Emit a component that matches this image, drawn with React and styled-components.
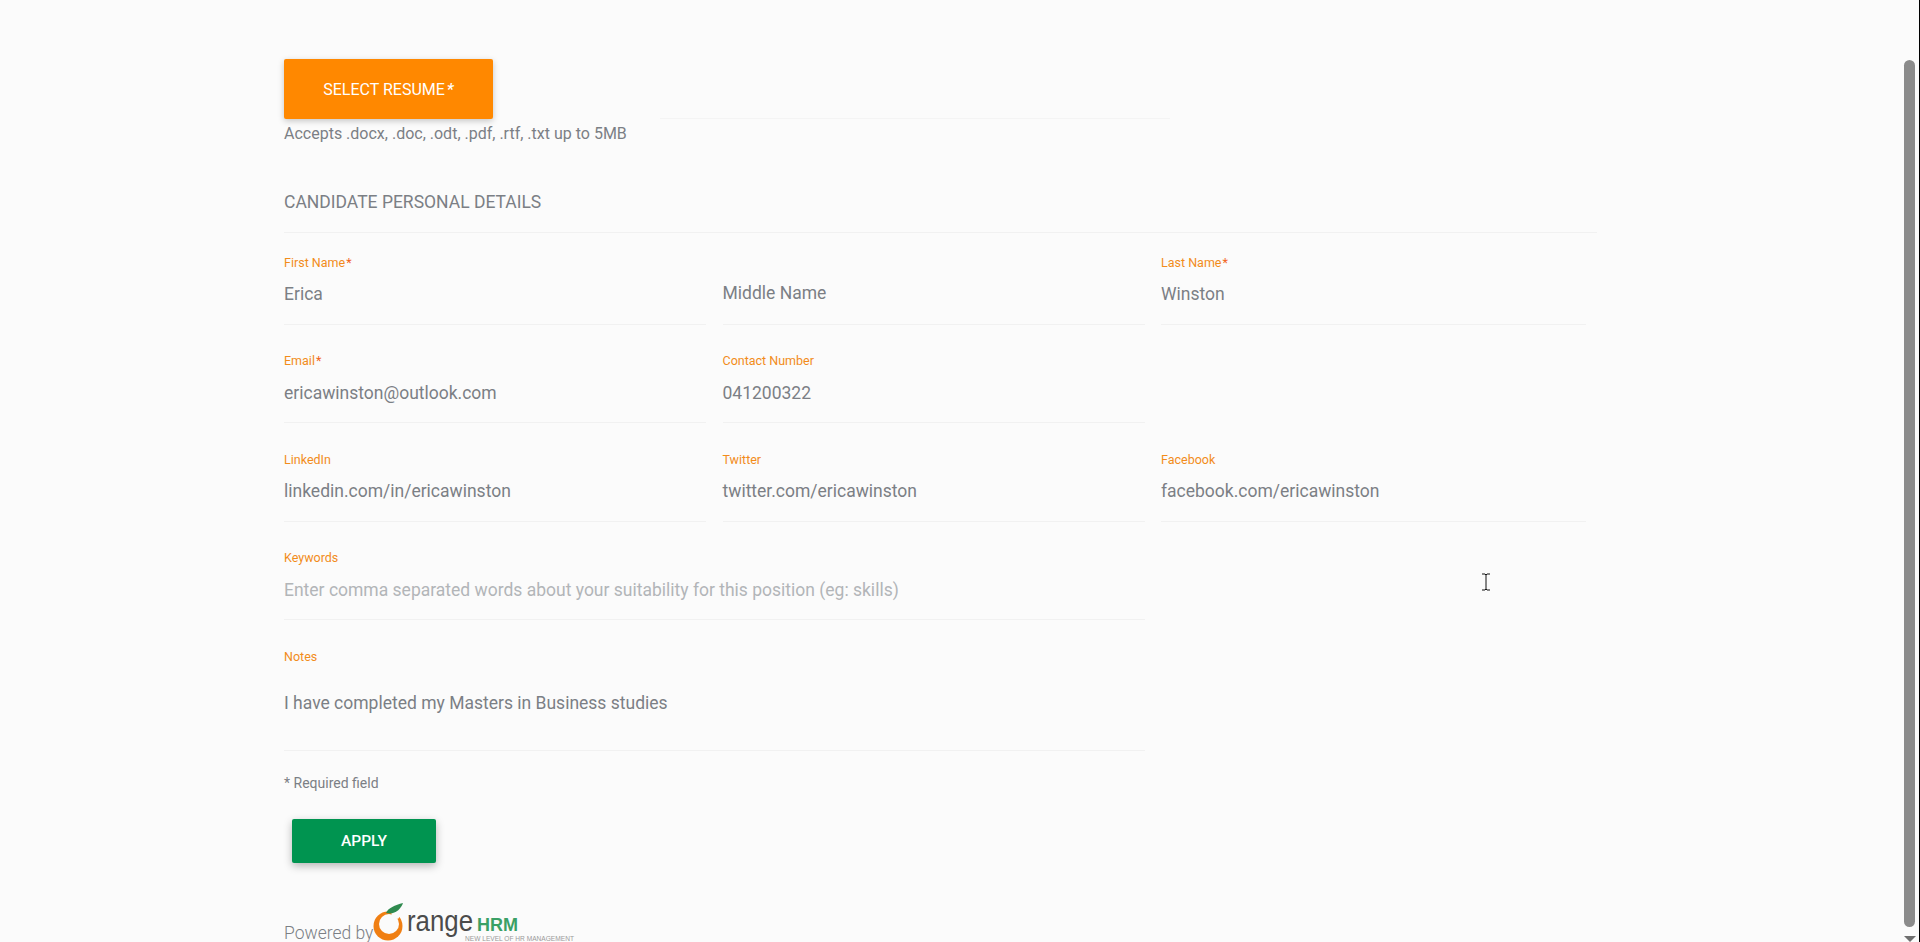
import styled, { createGlobalStyle } from "styled-components";

const GlobalStyle = createGlobalStyle`
  html, body {
    margin: 0;
    height: 100%;
    overflow: hidden;
    background: #fbfbfb;
    font-family: Roboto, "Liberation Sans", sans-serif;
    color: #7b7f85;
  }
`;

const Page = styled.main`
  position: relative;
  height: 942px;
  overflow: hidden;
  padding: 59px 0 0 284px;
  box-sizing: border-box;
`;

const UploadRow = styled.div`
  display: flex;
  align-items: flex-end;
  height: 60px;
`;

const SelectButton = styled.button`
  width: 209px;
  height: 60px;
  border: 0;
  border-radius: 2px;
  background: #ff8800;
  color: #fff;
  font: 400 16px Roboto, sans-serif;
  box-shadow: 0 2px 6px rgba(0, 0, 0, 0.22);
`;

const ButtonStar = styled.span`
  margin-left: 2px;
  font-style: italic;
  font-weight: 500;
`;

const FileLine = styled.div`
  width: 510px;
  margin-left: 167px;
  border-bottom: 1px solid #f4f4f4;
`;

const Hint = styled.p`
  margin: 5px 0 0;
  font-size: 16px;
  line-height: 20px;
`;

const SectionTitle = styled.h2`
  margin: 48px 0 0;
  width: 1313px;
  padding-bottom: 20px;
  border-bottom: 1px solid #f1f1f1;
  font-size: 17.5px;
  font-weight: 400;
  line-height: 20px;
`;

const Grid = styled.div`
  display: grid;
  grid-template-columns: 422px 422px 425px;
  column-gap: 16.5px;
  row-gap: 29.5px;
  margin-top: 22.6px;
`;

const Field = styled.div`
  grid-column: ${(p) => (p.$wide ? "1 / span 2" : p.$first ? "1" : "auto")};
  height: ${(p) => p.$tall || 69}px;
  box-sizing: border-box;
  border-bottom: 1px solid #f1f1f1;
`;

const Label = styled.label`
  display: block;
  height: 14px;
  font-size: 12.5px;
  line-height: 14px;
  color: #f28c1a;
`;

const Star = styled.span`
  margin-left: 1px;
  color: #f2641a;
`;

const Value = styled.div`
  margin-top: ${(p) => p.$gap || 13.5}px;
  font-size: 17.5px;
  line-height: 22px;
  color: ${(p) => (p.$placeholder ? "#b2b5b8" : "#7b7f85")};
`;

const Required = styled.p`
  margin: 23.5px 0 0;
  font-size: 14px;
  line-height: 18px;
`;

const ApplyButton = styled.button`
  display: block;
  width: 144px;
  height: 44px;
  margin: 27px 0 0 8px;
  border: 0;
  border-radius: 2px;
  background: #009450;
  color: #fff;
  font: 500 15.5px Roboto, sans-serif;
  box-shadow: 0 3px 8px rgba(0, 0, 0, 0.28);
`;

const Footer = styled.div`
  display: flex;
  align-items: flex-end;
  height: 44px;
  margin-top: 36px;
`;

const Powered = styled.span`
  font-size: 17.5px;
  font-weight: 300;
  line-height: 20px;
  white-space: nowrap;
`;

const Track = styled.div`
  position: absolute;
  top: 0;
  right: 0;
  bottom: 0;
  width: 16px;
  padding-top: 60px;
  display: flex;
  flex-direction: column;
  align-items: flex-start;
  gap: 9px;
  background: #fbfbfb;
  border-right: 1px solid #000;
  box-sizing: border-box;
`;

const Thumb = styled.div`
  width: 11px;
  height: 867px;
  border-radius: 6px;
  background: #8b8b8b;
`;

const DownArrow = styled.div`
  border-left: 6px solid transparent;
  border-right: 6px solid transparent;
  border-top: 6px solid #6f6f6f;
`;

const Cursor = styled.svg`
  position: absolute;
  left: 1481px;
  top: 573px;
`;

function Logo() {
  return (
    <svg width="205" height="44" viewBox="0 0 205 44" style={{ display: "block" }}>
      <circle cx="15" cy="27" r="14.5" fill="#f07f13" />
      <circle cx="16" cy="25" r="10" fill="#fbfbfb" />
      <path d="M17 8 L32 10 L25 20 L19 17 Z" fill="#fbfbfb" />
      <path d="M13 14 C15 9 22 6 30 4 C28 10 22 16 13 14 Z" fill="#2f8a4f" />
      <text x="34" y="32" fontFamily="Liberation Sans, sans-serif" fontSize="29" textLength="66" lengthAdjust="spacingAndGlyphs" fill="#4b4b4b">range</text>
      <text x="104" y="32" fontFamily="Liberation Sans, sans-serif" fontSize="18" fontWeight="700" fill="#3aa066">HRM</text>
      <text x="92" y="42" fontFamily="Liberation Sans, sans-serif" fontSize="6.6" fill="#9a9a9a">NEW LEVEL OF HR MANAGEMENT</text>
    </svg>
  );
}

const rows = [
  { label: "First Name", req: true, value: "Erica" },
  { value: "Middle Name", gap: 26.5 },
  { label: "Last Name", req: true, value: "Winston" },
  { label: "Email", req: true, value: "ericawinston@outlook.com" },
  { label: "Contact Number", value: "041200322" },
  { label: "LinkedIn", value: "linkedin.com/in/ericawinston", first: true },
  { label: "Twitter", value: "twitter.com/ericawinston" },
  { label: "Facebook", value: "facebook.com/ericawinston" },
];

export default function App() {
  return (
    <>
      <GlobalStyle />
      <Page>
        <UploadRow>
          <SelectButton>SELECT RESUME<ButtonStar>*</ButtonStar></SelectButton>
          <FileLine />
        </UploadRow>
        <Hint>Accepts .docx, .doc, .odt, .pdf, .rtf, .txt up to 5MB</Hint>
        <SectionTitle>CANDIDATE PERSONAL DETAILS</SectionTitle>
        <Grid>
          {rows.map((r) => (
            <Field key={r.value} $first={r.first}>
              {r.label && (
                <Label>
                  {r.label}
                  {r.req && <Star>*</Star>}
                </Label>
              )}
              <Value $gap={r.gap}>{r.value}</Value>
            </Field>
          ))}
          <Field $wide>
            <Label>Keywords</Label>
            <Value $placeholder>Enter comma separated words about your suitability for this position (eg: skills)</Value>
          </Field>
          <Field $wide $tall={101}>
            <Label>Notes</Label>
            <Value $gap={28}>I have completed my Masters in Business studies</Value>
          </Field>
        </Grid>
        <Required>* Required field</Required>
        <ApplyButton>APPLY</ApplyButton>
        <Footer>
          <Powered>Powered by</Powered>
          <Logo />
        </Footer>
        <Track>
          <Thumb />
          <DownArrow />
        </Track>
        <Cursor width="10" height="18" viewBox="0 0 10 18">
          <path d="M1 1h3l1 1 1-1h3M5 2v14M1 17h3l1-1 1 1h3" fill="none" stroke="#111" strokeWidth="1" />
        </Cursor>
      </Page>
    </>
  );
}
